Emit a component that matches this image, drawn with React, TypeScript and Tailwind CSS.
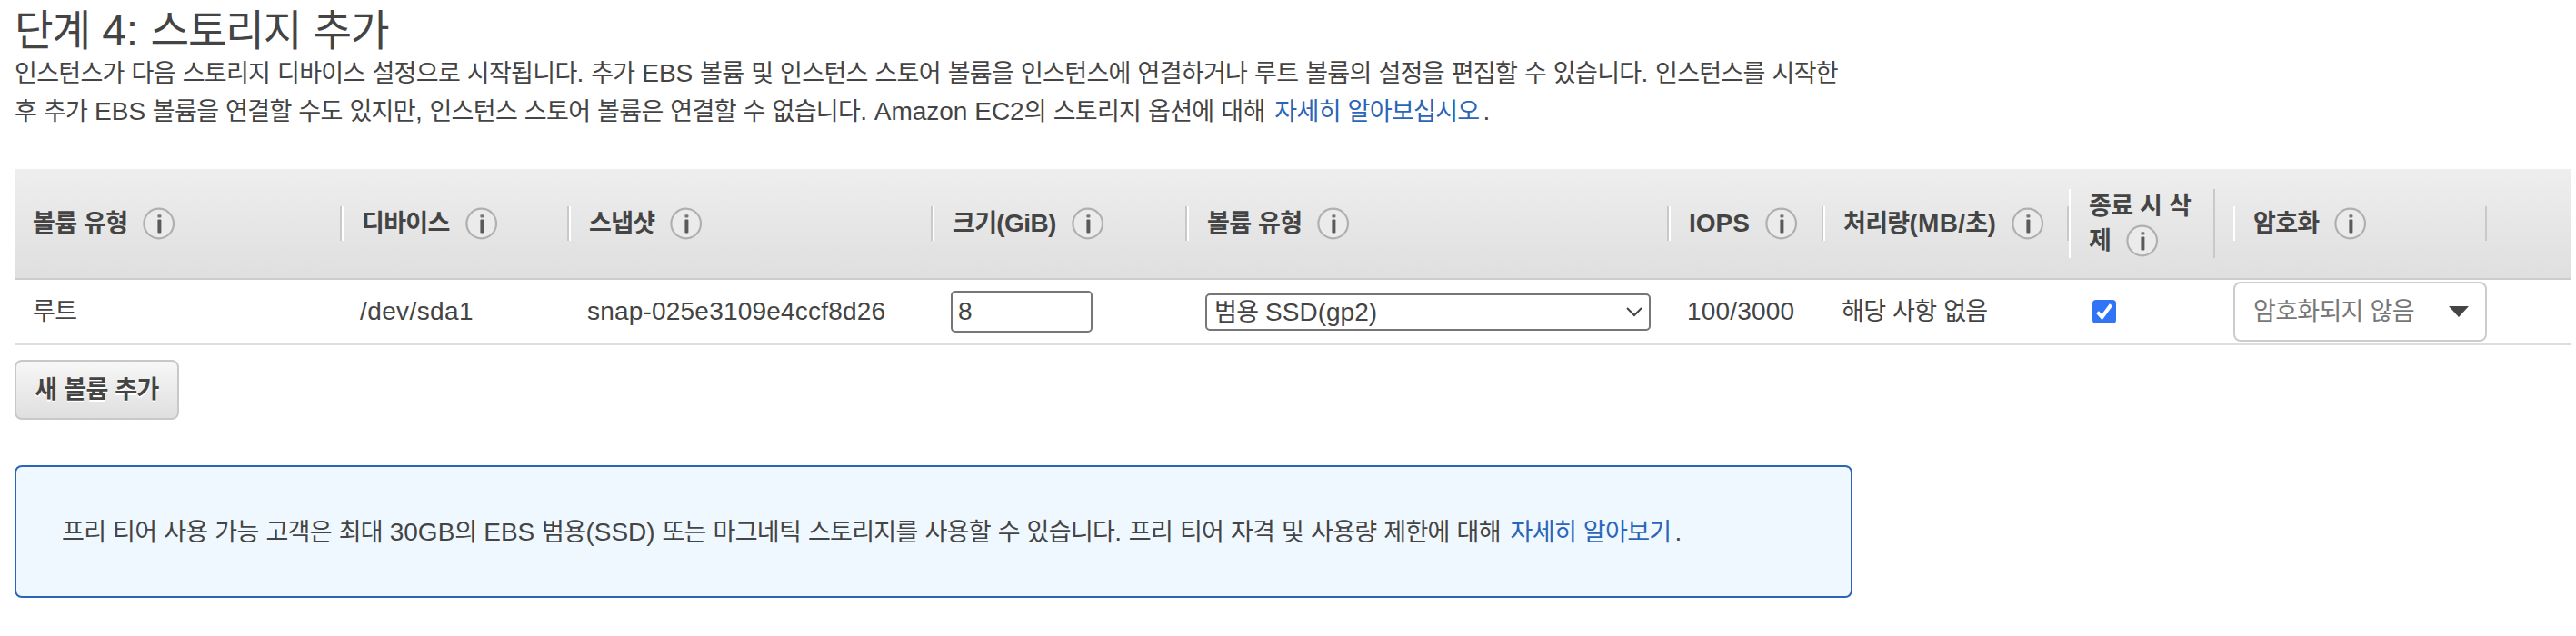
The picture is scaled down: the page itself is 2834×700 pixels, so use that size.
import React from "react";

const Txt = ({ children }: { children: string }) => {
  // hangul is set smaller and tighter than the latin text around it
  return (
    <>
      {children.split(/([\uac00-\ud7a3]+)/).map((part, key) =>
        /[\uac00-\ud7a3]/.test(part) ? (
          <span key={key} className="text-[0.965em] leading-none tracking-[-0.026em]">
            {part}
          </span>
        ) : (
          part
        )
      )}
    </>
  );
};

const InfoIcon = () => (
  <svg
    className="ml-[17px] inline-block h-9 w-9 align-[-9px]"
    viewBox="0 0 36 36"
  >
    <circle cx="17.7" cy="18" r="16.3" fill="#ebebeb" stroke="#b0b0b0" strokeWidth="2.2" />
    <rect x="16.4" y="8.2" width="4" height="3.4" rx="1" fill="#777" />
    <rect x="16.4" y="13.6" width="4" height="14.8" rx="1" fill="#5a5a5a" />
  </svg>
);

const columns = [
  { name: "볼륨 유형", edge: "border-r-2 whitespace-nowrap" },
  { name: "디바이스", edge: "border-x-2 whitespace-nowrap" },
  { name: "스냅샷", edge: "border-x-2 whitespace-nowrap" },
  { name: "크기(GiB)", edge: "border-x-2 whitespace-nowrap tracking-[-0.6px]" },
  { name: "볼륨 유형", edge: "border-x-2 whitespace-nowrap" },
  { name: "IOPS", edge: "border-x-2 whitespace-nowrap" },
  { name: "처리량(MB/초)", edge: "border-x-2 whitespace-nowrap tracking-[0.3px]" },
  { name: "종료 시 삭제", edge: "border-x-2 mr-5 pr-3 break-all" },
  { name: "암호화", edge: "border-x-2 whitespace-nowrap" },
];

const grid =
  "grid grid-cols-[360px_250px_400px_280px_530px_170px_270px_181px_279px_1fr] items-center";

const App = () => {
  return (
    <div className="h-[700px] overflow-hidden bg-white pl-4 pr-1.5 font-['Liberation_Sans','Noto_Sans_CJK_KR',sans-serif] text-[28px] leading-[42px] text-[#444]">
      <h1 className="h-[60px] pt-1.5 text-[48px] leading-[56px]">
        <Txt>단계 4: 스토리지 추가</Txt>
      </h1>
      <p className="h-[126px] whitespace-nowrap">
        <Txt>
          인스턴스가 다음 스토리지 디바이스 설정으로 시작됩니다. 추가 EBS 볼륨 및 인스턴스 스토어 볼륨을 인스턴스에 연결하거나 루트 볼륨의 설정을 편집할 수 있습니다. 인스턴스를 시작한
        </Txt>
        <br />
        <Txt>
          후 추가 EBS 볼륨을 연결할 수도 있지만, 인스턴스 스토어 볼륨은 연결할 수 없습니다. Amazon EC2의 스토리지 옵션에 대해
        </Txt>{" "}
        <a className="mr-1 ml-[3px] text-[#2a65b8]">
          <Txt>자세히 알아보십시오</Txt>
        </a>
        .
      </p>

      <div
        className={`${grid} h-[122px] border-b-2 border-[#ccc] bg-linear-to-b from-[#eee] to-[#dfdfdf] font-bold leading-[38px]`}
      >
        {columns.map((col, key) => (
          <div key={key} className={`${col.edge} border-l-white border-r-[#c9c9c9] pl-5`}>
            <Txt>{col.name}</Txt>
            <InfoIcon />
          </div>
        ))}
      </div>

      <div className={`${grid} h-[72px] border-b-2 border-[#ddd] whitespace-nowrap`}>
        <div className="pl-5">
          <Txt>루트</Txt>
        </div>
        <div className="pl-5 tracking-[0.4px]">/dev/sda1</div>
        <div className="pl-5 tracking-[0.2px]">snap-025e3109e4ccf8d26</div>
        <div className="pl-5">
          <input
            className="block h-[46px] w-[156px] rounded-[5px] border-2 border-[#767676] px-1.5"
            defaultValue="8"
          />
        </div>
        <div className="pl-5">
          <div className="flex h-[41px] w-[490px] items-center justify-between rounded-[5px] border-2 border-[#767676] pl-2 pr-1.5">
            <span className="pt-0.5">
              <Txt>범용 SSD(gp2)</Txt>
            </span>
            <svg className="h-3 w-5" viewBox="0 0 20 12" fill="none" stroke="#444" strokeWidth="2">
              <path d="M2 2l8 8 8-8" />
            </svg>
          </div>
        </div>
        <div className="pl-5 tracking-[0.2px]">100/3000</div>
        <div className="pl-5">
          <Txt>해당 사항 없음</Txt>
        </div>
        <div className="pl-[26px]">
          <svg className="h-[26px] w-[26px]" viewBox="0 0 26 26">
            <rect width="26" height="26" rx="4" fill="#3174f6" />
            <path d="M5.5 13.5l5 5.5L20.5 5.5" fill="none" stroke="#fff" strokeWidth="4" />
          </svg>
        </div>
        <div className="flex h-[66px] items-center justify-between rounded-lg border-2 border-[#ccc] pl-5 pr-[18px] text-[#777]">
          <span>
            <Txt>암호화되지 않음</Txt>
          </span>
          <svg className="h-3 w-[22px]" viewBox="0 0 22 12">
            <path d="M0 0h22L11 12z" fill="#444" />
          </svg>
        </div>
      </div>

      <button className="mt-4 block h-[66px] w-[181px] rounded-lg border-2 border-[#c8c8c8] bg-linear-to-b from-[#f7f7f7] to-[#dfdfdf] font-bold whitespace-nowrap [text-shadow:0_2px_0_#fff]">
        <Txt>새 볼륨 추가</Txt>
      </button>

      <div className="mt-[50px] h-[146px] w-[2022px] rounded-lg border-2 border-[#2a65b8] bg-[#f0f8ff] pt-[51px] pl-[50px] whitespace-nowrap">
        <Txt>
          프리 티어 사용 가능 고객은 최대 30GB의 EBS 범용(SSD) 또는 마그네틱 스토리지를 사용할 수 있습니다. 프리 티어 자격 및 사용량 제한에 대해
        </Txt>{" "}
        <a className="mr-1 ml-[3px] text-[#2a65b8]">
          <Txt>자세히 알아보기</Txt>
        </a>
        .
      </div>
    </div>
  );
};

export default App;
